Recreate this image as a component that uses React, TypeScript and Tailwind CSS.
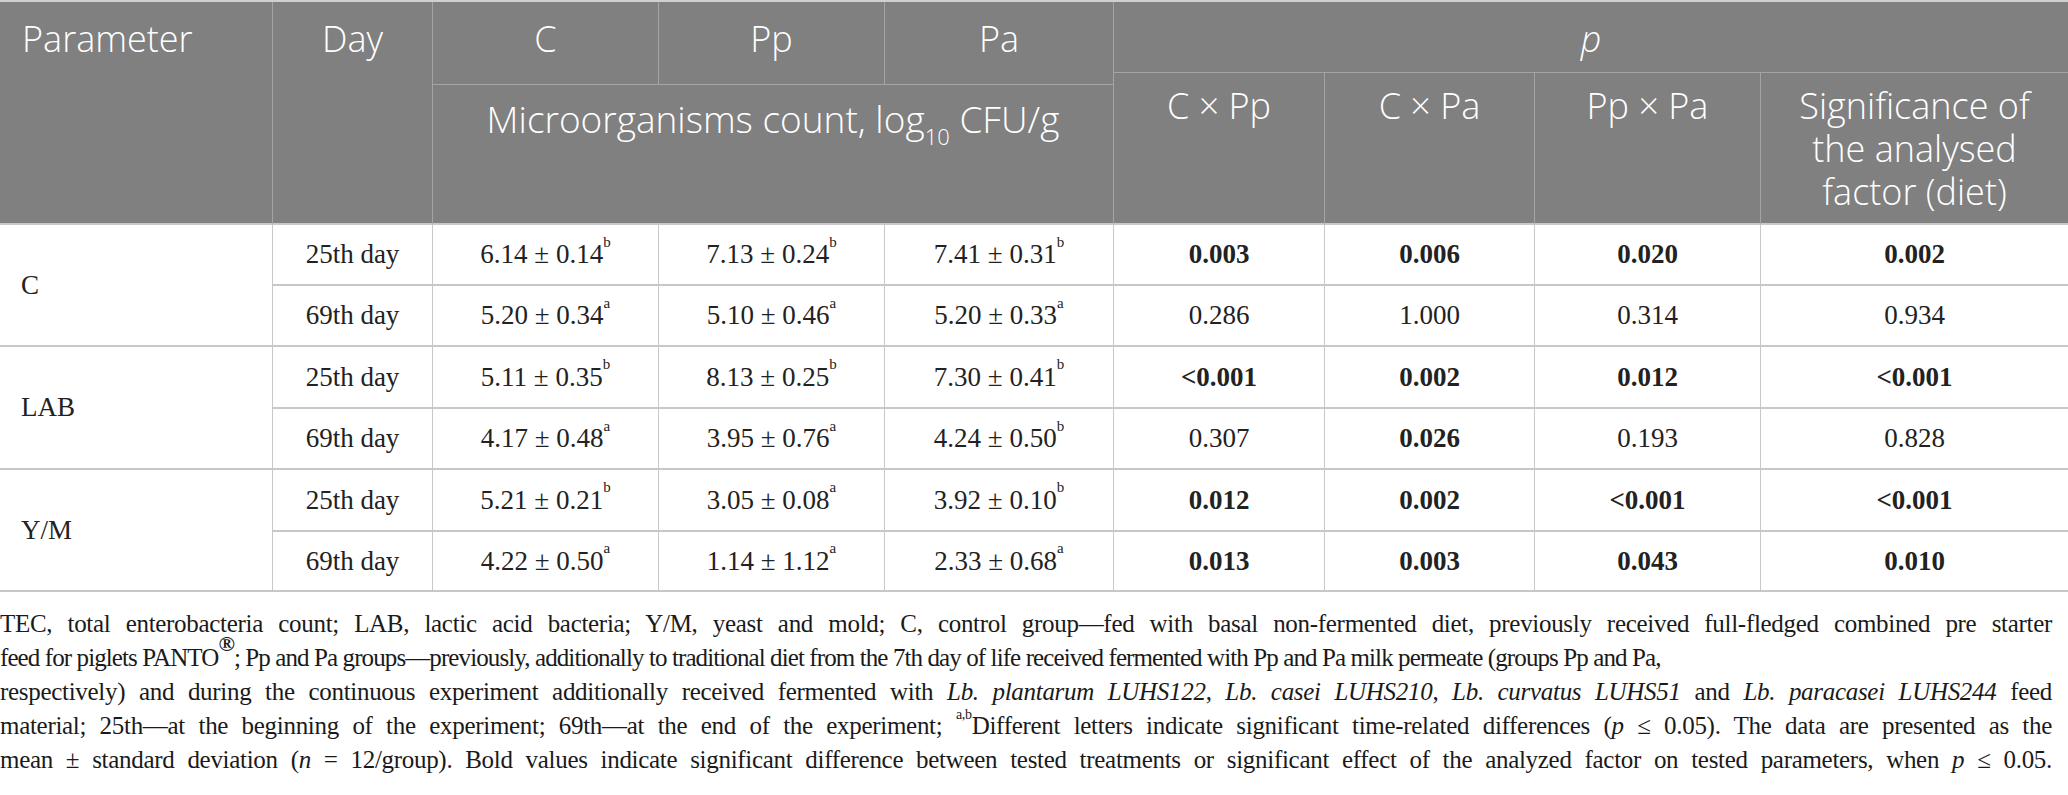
import React from "react"

type Val = [string, string]
type P = [string, boolean]
type DayRow = { day: string; vals: Val[]; ps: P[] }

const groups: { name: string; rows: DayRow[] }[] = [
  {
    name: "C",
    rows: [
      { day: "25th day", vals: [["6.14 ± 0.14", "b"], ["7.13 ± 0.24", "b"], ["7.41 ± 0.31", "b"]], ps: [["0.003", true], ["0.006", true], ["0.020", true], ["0.002", true]] },
      { day: "69th day", vals: [["5.20 ± 0.34", "a"], ["5.10 ± 0.46", "a"], ["5.20 ± 0.33", "a"]], ps: [["0.286", false], ["1.000", false], ["0.314", false], ["0.934", false]] },
    ],
  },
  {
    name: "LAB",
    rows: [
      { day: "25th day", vals: [["5.11 ± 0.35", "b"], ["8.13 ± 0.25", "b"], ["7.30 ± 0.41", "b"]], ps: [["<0.001", true], ["0.002", true], ["0.012", true], ["<0.001", true]] },
      { day: "69th day", vals: [["4.17 ± 0.48", "a"], ["3.95 ± 0.76", "a"], ["4.24 ± 0.50", "b"]], ps: [["0.307", false], ["0.026", true], ["0.193", false], ["0.828", false]] },
    ],
  },
  {
    name: "Y/M",
    rows: [
      { day: "25th day", vals: [["5.21 ± 0.21", "b"], ["3.05 ± 0.08", "a"], ["3.92 ± 0.10", "b"]], ps: [["0.012", true], ["0.002", true], ["<0.001", true], ["<0.001", true]] },
      { day: "69th day", vals: [["4.22 ± 0.50", "a"], ["1.14 ± 1.12", "a"], ["2.33 ± 0.68", "a"]], ps: [["0.013", true], ["0.003", true], ["0.043", true], ["0.010", true]] },
    ],
  },
]

const head = "bg-[#808080] text-white border-r border-b border-[#a4a4a4] text-center font-['Open_Sans',sans-serif] font-light text-[36px] leading-[43px]"
const body = "border-r border-b-2 border-[#c8c8c8] flex items-center justify-center"
const full = "w-[2052px] tracking-[-0.3px] [text-align-last:justify]"

export default function App() {
  return (
    <main className="w-[2068px] min-h-screen bg-white text-[#222]">
      <div className="grid grid-cols-[273px_160px_226px_226px_229px_211px_210px_226px_1fr] grid-rows-[71px_12px_140px_61px_61px_62px_61px_62px_60px] border-t-2 border-[#d0d0d0] font-['Liberation_Serif','Times_New_Roman',serif] text-[27px]">
        {/* header */}
        <div className={`${head} row-span-3 text-left pl-[22px] pt-[15px] border-b-2 border-b-[#c8c8c8]`}>Parameter</div>
        <div className={`${head} row-span-3 pt-[15px] border-b-2 border-b-[#c8c8c8]`}>Day</div>
        {["C", "Pp", "Pa"].map(h => (
          <div key={h} className={`${head} row-span-2 pt-[15px]`}>{h}</div>
        ))}
        <div className={`${head} col-span-4 pt-[15px] border-r-0`}>
          <i>p</i>
        </div>
        {["C × Pp", "C × Pa", "Pp × Pa"].map(h => (
          <div key={h} className={`${head} row-span-2 pt-[11px] border-b-2 border-b-[#c8c8c8]`}>{h}</div>
        ))}
        <div className={`${head} row-span-2 pt-[11px] px-2 border-r-0 border-b-2 border-b-[#c8c8c8]`}>
          Significance of the analysed factor (diet)
        </div>
        <div className={`${head} col-span-3 pt-[12px] text-[37px] border-b-2 border-b-[#c8c8c8]`}>
          Microorganisms count, log<sub className="text-[22px] align-[-6px]">10</sub> CFU/g
        </div>

        {/* body */}
        {groups.map(g =>
          g.rows.map((r, i) => (
            <React.Fragment key={g.name + r.day}>
              {i === 0 && (
                <div className="row-span-2 border-r border-b-2 border-[#c8c8c8] flex items-center pl-[21px]">{g.name}</div>
              )}
              <div className={body}>{r.day}</div>
              {r.vals.map(([v, s], k) => (
                <div key={k} className={body}>
                  <span>
                    {v}
                    <sup className="text-[15px] align-[9px] leading-none">{s}</sup>
                  </span>
                </div>
              ))}
              {r.ps.map(([p, b], k) => (
                <div key={k} className={`${body} ${k === 3 ? "border-r-0" : ""} ${b ? "font-bold" : ""}`}>{p}</div>
              ))}
            </React.Fragment>
          ))
        )}
      </div>

      <div className="mt-[15px] font-['Liberation_Serif','Times_New_Roman',serif] text-[25px] leading-[34px] text-[#1a1a1a]">
        <div className={full}>TEC, total enterobacteria count; LAB, lactic acid bacteria; Y/M, yeast and mold; C, control group—fed with basal non-fermented diet, previously received full-fledged combined pre starter</div>
        <div className="tracking-[-0.9px] whitespace-nowrap">
          feed for piglets PANTO<sup className="text-[22px] font-bold align-[4px] leading-none">®</sup>; Pp and Pa groups—previously, additionally to traditional diet from the 7th day of life received fermented with Pp and Pa milk permeate (groups Pp and Pa,
        </div>
        <div className={full}>
          respectively) and during the continuous experiment additionally received fermented with <i>Lb. plantarum LUHS122</i>, <i>Lb. casei LUHS210</i>, <i>Lb. curvatus LUHS51</i> and <i>Lb. paracasei LUHS244</i> feed
        </div>
        <div className={full}>
          material; 25th—at the beginning of the experiment; 69th—at the end of the experiment; <sup className="text-[14px] align-[8px] leading-none">a,b</sup>Different letters indicate significant time-related differences (<i>p</i> ≤ 0.05). The data are presented as the
        </div>
        <div className={full}>
          mean ± standard deviation (<i>n</i> = 12/group). Bold values indicate significant difference between tested treatments or significant effect of the analyzed factor on tested parameters, when <i>p</i> ≤ 0.05.
        </div>
      </div>
    </main>
  )
}
